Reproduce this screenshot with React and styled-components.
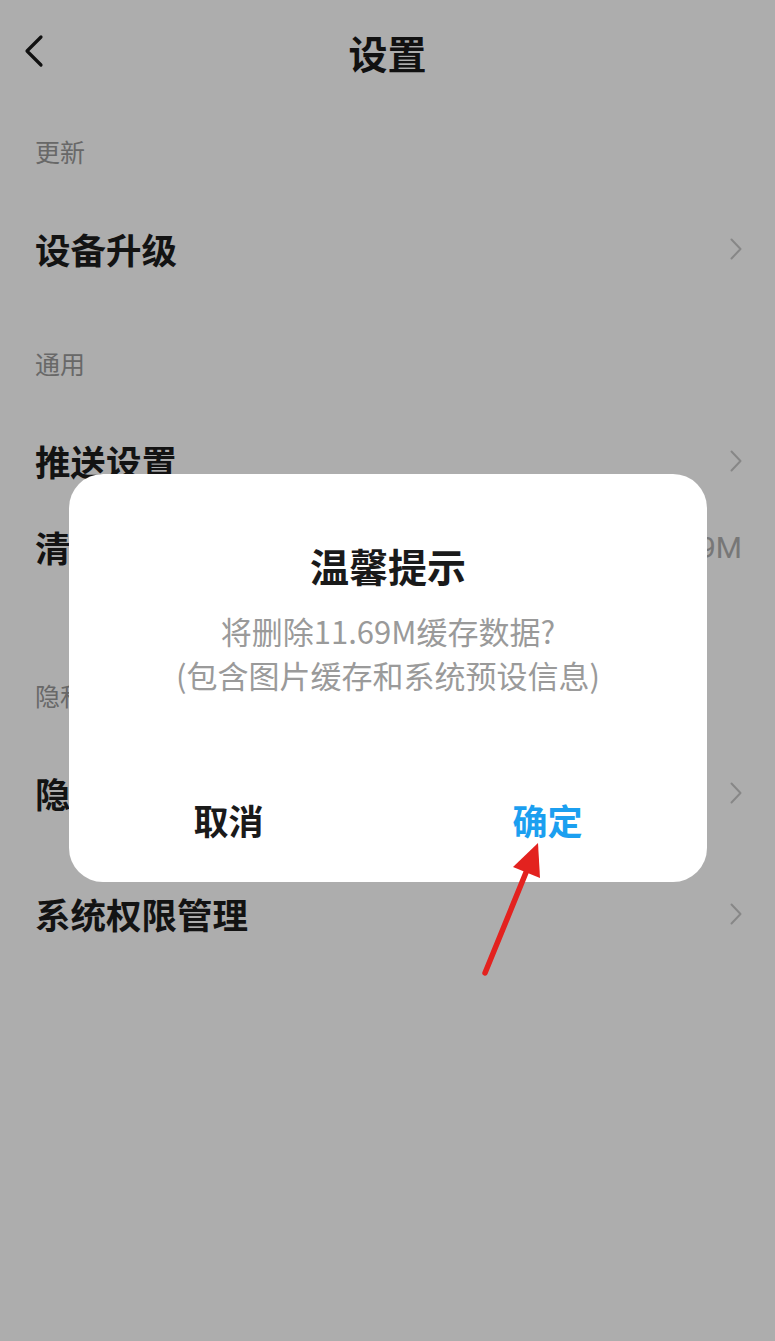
import React from "react";
import styled, { createGlobalStyle } from "styled-components";

const Global = createGlobalStyle`
  html, body { margin: 0; padding: 0; background: #ffffff; }
  body { font-family: "Noto Sans CJK SC", "Noto Sans", sans-serif; }
  * { box-sizing: border-box; }
`;

const Page = styled.div`
  width: 775px;
  min-height: 1341px;
  background: #ffffff;
  position: relative;
`;

const Header = styled.header`
  height: 104px;
  display: flex;
  align-items: center;
  justify-content: center;
  position: relative;
`;

const BackButton = styled.button`
  position: absolute;
  left: 18px;
  top: 28px;
  width: 32px;
  height: 46px;
  padding: 0;
  border: none;
  background: transparent;
  display: flex;
  align-items: center;
  justify-content: center;
`;

const Title = styled.h1`
  margin: 0;
  font-size: 39px;
  font-weight: 700;
  color: #1a1a1a;
  line-height: 50px;
`;

const SectionTitle = styled.div`
  padding: ${(p) => (p.$first ? "32px" : "56px")} 35px 40px;
  font-size: 25px;
  line-height: 30px;
  color: #9a9a9a;
`;

const Row = styled.div`
  height: ${(p) => 86 + (p.$extra || 0)}px;
  padding: 0 33px ${(p) => p.$extra || 0}px 35px;
  display: flex;
  align-items: center;
  justify-content: space-between;
`;

const Label = styled.span`
  font-size: 35.5px;
  font-weight: 700;
  color: #1c1c1c;
  line-height: 46px;
`;

const Value = styled.span`
  font-size: 30px;
  color: #b0b0b0;
  font-family: "Roboto", "Noto Sans CJK SC", sans-serif;
`;

const Overlay = styled.div`
  position: fixed;
  inset: 0;
  background: rgba(0, 0, 0, 0.32);
  z-index: 10;
`;

const Dialog = styled.div`
  position: fixed;
  top: 474px;
  left: 69px;
  width: 638px;
  height: 408px;
  background: #ffffff;
  border-radius: 34px;
  z-index: 20;
  display: flex;
  flex-direction: column;
  align-items: center;
  padding-top: 66px;
`;

const DialogTitle = styled.h2`
  margin: 0;
  font-size: 39px;
  font-weight: 700;
  line-height: 50px;
  color: #1a1a1a;
`;

const Message = styled.p`
  margin: 19px 0 0;
  font-size: 31px;
  line-height: 44px;
  color: #9a9a9a;
  text-align: center;
`;

const ButtonRow = styled.div`
  margin-top: auto;
  margin-bottom: 15px;
  width: 100%;
  height: 96px;
  display: grid;
  grid-template-columns: 1fr 1fr;
`;

const DialogButton = styled.button`
  border: none;
  background: transparent;
  font-family: inherit;
  font-size: 35px;
  font-weight: 700;
  color: ${(p) => (p.$primary ? "#1b9ff0" : "#1a1a1a")};
  display: flex;
  align-items: center;
  justify-content: center;
`;

const ArrowLayer = styled.svg`
  position: fixed;
  left: 0;
  top: 0;
  width: 775px;
  height: 1341px;
  z-index: 30;
  pointer-events: none;
`;

const Chevron = () => (
  <svg width="12" height="22" viewBox="0 0 12 22">
    <polyline points="1.5,1.5 10.5,11 1.5,20.5" fill="none" stroke="#c8c8c8" strokeWidth="2" strokeLinecap="round" strokeLinejoin="round" />
  </svg>
);

export default function App() {
  return (
    <>
      <Global />
      <Page>
        <Header>
          <BackButton aria-label="返回">
            <svg width="22" height="34" viewBox="0 0 22 34">
              <polyline points="18,3 4,17 18,31" fill="none" stroke="#1a1a1a" strokeWidth="3.2" strokeLinecap="round" strokeLinejoin="round" />
            </svg>
          </BackButton>
          <Title>设置</Title>
        </Header>

        <SectionTitle $first>更新</SectionTitle>
        <Row>
          <Label>设备升级</Label>
          <Chevron />
        </Row>

        <SectionTitle>通用</SectionTitle>
        <Row>
          <Label>推送设置</Label>
          <Chevron />
        </Row>
        <Row $extra={34}>
          <Label>清除缓存</Label>
          <Value>11.69M</Value>
        </Row>

        <SectionTitle>隐私</SectionTitle>
        <Row $extra={35}>
          <Label>隐私设置</Label>
          <Chevron />
        </Row>
        <Row>
          <Label>系统权限管理</Label>
          <Chevron />
        </Row>
      </Page>

      <Overlay />
      <Dialog>
        <DialogTitle>温馨提示</DialogTitle>
        <Message>
          将删除11.69M缓存数据?
          <br />
          (包含图片缓存和系统预设信息)
        </Message>
        <ButtonRow>
          <DialogButton>取消</DialogButton>
          <DialogButton $primary>确定</DialogButton>
        </ButtonRow>
      </Dialog>

      <ArrowLayer viewBox="0 0 775 1341">
        <line x1="485" y1="973" x2="527" y2="870" stroke="#e3221f" strokeWidth="5.5" strokeLinecap="round" />
        <polygon points="538,843 540,878 513,867" fill="#e3221f" />
      </ArrowLayer>
    </>
  );
}
